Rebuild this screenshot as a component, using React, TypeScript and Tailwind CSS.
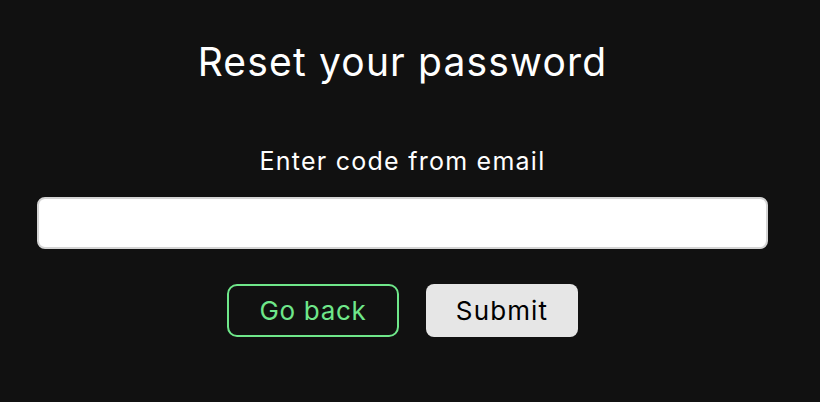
export default function App() {
  return (
    <div className="min-h-[402px] w-full bg-[#111111]" style={{ fontFamily: "Inter, 'Noto Sans', sans-serif" }}>
      <div className="flex w-[805px] flex-col items-center pt-[42px]">
        <h1 className="text-[39px] leading-none font-normal tracking-[0.03em] text-white">Reset your password</h1>

        <label htmlFor="code" className="mt-[68px] text-[25px] leading-none tracking-[0.05em] text-white">
          Enter code from email
        </label>
        <input
          id="code"
          type="text"
          className="mt-[23px] h-[52px] w-[731px] rounded-lg border-2 border-[#d4d4d4] bg-white px-3 text-xl text-black outline-none"
        />

        <div className="mt-[35px] flex gap-[27px]">
          <button className="h-[53px] w-[172px] rounded-[10px] border-2 border-[#6fe78a] text-[26px] tracking-[0.027em] text-[#6fe78a]">
            Go back
          </button>
          <button className="h-[53px] w-[152px] rounded-lg bg-[#e6e6e6] text-[26px] tracking-[0.043em] text-black">
            Submit
          </button>
        </div>
      </div>
    </div>
  );
}
